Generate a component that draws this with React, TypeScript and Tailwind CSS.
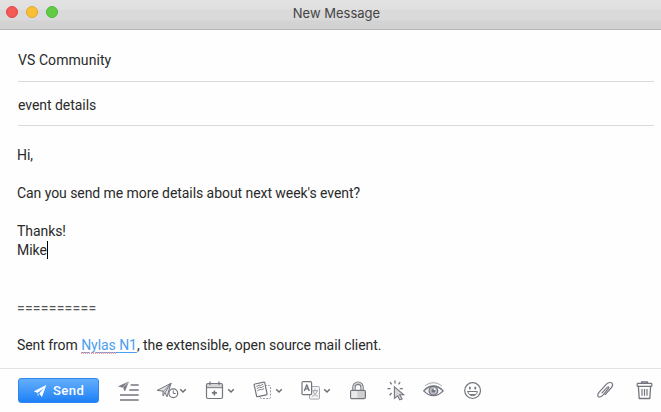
import type { ReactNode } from "react";

function Icon({ w, className = "", children }: { w: number; className?: string; children: ReactNode }) {
  return (
    <svg
      width={w}
      height={30}
      viewBox={`0 0 ${w} 30`}
      fill="none"
      stroke="#74767f"
      strokeWidth={1.2}
      strokeLinecap="round"
      strokeLinejoin="round"
      className={`shrink-0 ${className}`}
    >
      {children}
    </svg>
  );
}

function Chevron({ className }: { className: string }) {
  return (
    <svg width={8} height={30} viewBox="0 0 8 30" fill="none" stroke="#6b6d75" strokeWidth={1.5} className={`shrink-0 ${className}`}>
      <path d="M1.2 14.3 4 17 6.8 14.3" />
    </svg>
  );
}

function TitleBar() {
  return (
    <header className="relative flex h-[30px] shrink-0 justify-center border-b border-[#b5b5b5] bg-[linear-gradient(#e2e2e2_0px,#e0e0e0_9px,#dadada_10px,#d9d9d9_20px,#d3d3d3_21px,#d2d2d2_29px)]">
      <div className="absolute top-[6px] left-[6px] flex gap-2">
        <span className="size-3 rounded-full border border-[#e2443f] bg-[#f25b57]" />
        <span className="size-3 rounded-full border border-[#e3a52c] bg-[#f9bf35]" />
        <span className="size-3 rounded-full border border-[#4fb637] bg-[#61cb45]" />
      </div>
      <h1 className="pl-[12px] font-[Inter,sans-serif] text-[13px] leading-[27px] text-[#454545]">New Message</h1>
    </header>
  );
}

function Toolbar() {
  return (
    <footer className="flex h-[44px] shrink-0 items-start border-t border-[#e2e2e2] pt-[6px] pl-[18px]">
      <button className="mt-[3px] flex h-[25px] w-[81px] shrink-0 items-center rounded-[3px] border border-[#2f86f0] bg-linear-to-b from-[#62aefa] to-[#1b80f7] pl-[14px] text-[13px] font-medium tracking-[0.5px] text-white">
        <svg width={14} height={14} viewBox="0 0 14 14" fill="#fff" className="mr-[6px] shrink-0">
          <path d="M.8 7.2 13.3 1 9 13 6.2 9.7 11 3.7 4.6 8.9z" />
          <path d="M4.5 9.2 5.8 10.3 4.9 12.4z" />
        </svg>
        Send
      </button>

      <Icon w={24} className="ml-[18px]">
        <path d="M2 11.2 11.4 7 7.8 16 6.6 12.8z" fill="#74767f" strokeWidth={0.6} />
        <path d="M10.5 8 5.7 12.6" stroke="#fff" strokeWidth={0.7} />
        <path d="M13.7 10h8M12.3 15h9.4M3 20h18.7M3 25h18.7" strokeWidth={1.7} strokeLinecap="butt" />
      </Icon>

      <Icon w={24} className="ml-[14px]">
        <path d="M2.5 15.2 16 8.3 12 21.8 9.9 17.7 8 21V16.5z" fill="#e4e4e6" strokeWidth={1} />
        <path d="M16 8.3 8 16.8M16 8.3 10 17.6" strokeWidth={0.9} />
        <circle cx="18.3" cy="18.3" r="4.4" fill="#fff" />
        <path d="M18.3 15.8v2.7h2" strokeWidth={1} />
      </Icon>
      <Chevron className="" />

      <Icon w={22} className="ml-[17px]">
        <path d="M2.5 8.5h16v4.2h-16z" fill="#d6d6d8" stroke="none" />
        <rect x="2.5" y="8.5" width="16" height="15" rx="1.5" />
        <path d="M2.5 12.7h16" strokeWidth={1} />
        <path d="M6 7v2.5M15 7v2.5" strokeWidth={1.3} />
        <path d="M10.4 15.4v5M7.9 17.9h5" strokeWidth={1.6} strokeLinecap="butt" />
      </Icon>
      <Chevron className="ml-[1px]" />

      <Icon w={22} className="ml-[16px]">
        <rect x="9.5" y="10.5" width="10" height="13" rx="1" stroke="#96979d" strokeDasharray="2 1.3" strokeLinecap="butt" strokeWidth={1} />
        <path d="M4 9 12.8 7.2Q13.6 7 13.8 7.9L16 18.6Q16.2 19.6 15.3 19.8L6.8 21.7Q5.8 21.9 5.6 21L3.2 10.2Q3 9.2 4 9z" fill="#fff" strokeWidth={1.2} />
        <path d="M5.6 11.4 8 10.1 9.6 10.6 12 9.3M6.1 13.5 8.5 12.1 10.1 12.7 12.5 11.4M6.6 15.6 9 14.4 10.8 14.7 12.9 13.6" strokeWidth={0.9} />
      </Icon>
      <Chevron className="ml-[2px]" />

      <Icon w={22} className="ml-[17px]">
        <rect x="9.5" y="11.5" width="10" height="12.6" rx="1" stroke="#a8a9ae" fill="#f3f3f4" strokeWidth={1} />
        <path d="M12.3 15.7h5.4M15 14.3v1.4M17 16.2C16.3 18.7 14.5 20.5 12.5 21.1M13.3 16.5C14 18.9 15.8 20.7 17.7 21.1" stroke="#96979d" strokeWidth={0.8} />
        <rect x="2" y="6.7" width="9.6" height="13" rx="1.2" fill="#fff" />
        <path d="M4.3 15.9 6.8 9.8 9.3 15.9M5.2 13.9h3.2" strokeWidth={1.4} strokeLinecap="butt" />
      </Icon>
      <Chevron className="ml-[1px]" />

      <Icon w={20} className="ml-[17px]">
        <path d="M4.8 15.3v-3.1a5.2 5.2 0 0 1 10.4 0v3.1M7.1 15.3v-3a2.9 2.9 0 0 1 5.8 0v3" strokeWidth={1.1} />
        <path d="M6 15v-2.8a4 4 0 0 1 8 0V15" stroke="#c4c5c9" strokeWidth={1} />
        <rect x="2.6" y="15.4" width="14.8" height="8.2" rx="1.3" fill="#cfcfd2" />
        <path d="M3.3 16.1h6v6.8h-6z" fill="#e9e9eb" stroke="none" />
      </Icon>

      <Icon w={22} className="ml-[17px]">
        <path d="M9.4 11.8 18.7 19.8H14.7L17.1 23.9 14.8 24.9 12.7 20.9 9.4 23.4z" fill="#d9d9db" strokeWidth={1.1} strokeLinejoin="miter" />
        <path d="M10 5.6v3M5 7.2 6.7 9.4M15.2 7.2 13.5 9.4M2.5 13.7h3M14.8 13.7h3M4.6 20.2 6.6 18" strokeWidth={1.3} strokeLinecap="butt" />
      </Icon>

      <Icon w={25} className="ml-[14px]">
        <path d="M2.7 15.9Q7.2 11 12.4 11T22.2 15.9Q17.6 20.7 12.4 20.7T2.7 15.9z" fill="#f5f5f6" strokeWidth={1.3} />
        <path d="M4.2 10.6Q12.4 4.7 20.6 10.6" stroke="#b8b9bd" strokeWidth={1.1} />
        <circle cx="12.4" cy="15.7" r="4.3" fill="#b9bac0" />
        <circle cx="12.4" cy="15.7" r="1.9" fill="#74767f" stroke="none" />
        <circle cx="13.5" cy="14.2" r="0.9" fill="#fff" stroke="none" />
      </Icon>

      <Icon w={22} className="ml-[16px]">
        <circle cx="10.6" cy="15.6" r="7.9" />
        <ellipse cx="7.9" cy="13.1" rx="1" ry="1.5" fill="#74767f" stroke="none" />
        <ellipse cx="13.3" cy="13.1" rx="1" ry="1.5" fill="#74767f" stroke="none" />
        <path d="M5.9 16.5h9.4a4.7 4.2 0 0 1-9.4 0z" fill="#fff" strokeWidth={1} />
        <path d="M7 19h7.2a4.4 2.8 0 0 1-7.2 0z" fill="#74767f" stroke="none" />
      </Icon>

      <Icon w={20} className="ml-auto">
        <path d="M7 17.9 12.5 12.1C13.2 11.2 14.4 12.2 13.7 13.1L8.2 19.8C5.6 22.4 3 22.8 2.8 20.7 2.6 19.6 3.2 18.4 4.2 17.2L11.5 9.2C13.6 7.1 16.3 7 17.3 8.5 18.2 10 17.4 11.5 16 13.2L10.2 19.6" />
      </Icon>

      <Icon w={21} className="mr-[6px] ml-[19px]">
        <path d="M7.5 8.2V7h6v1.2" strokeWidth={1.3} />
        <rect x="3.2" y="8.4" width="14.6" height="3" rx=".5" />
        <path d="M4.4 11.5 5.2 23.5h10.6L16.6 11.5" strokeWidth={1.3} />
        <path d="M8 14v6.7M10.5 14v6.7M13 14v6.7" strokeLinecap="butt" />
      </Icon>
    </footer>
  );
}

export default function App() {
  return (
    <div className="flex h-[412px] w-[661px] flex-col overflow-hidden bg-[#fefefe] font-[Roboto,sans-serif] text-[14px] text-[#2a2a2a]">
      <TitleBar />
      <section className="mr-[7px] ml-[18px] shrink-0">
        <div className="h-[52px] border-b border-[#dadada] pt-[21px] leading-[19px] tracking-[0.07px]">VS Community</div>
        <div className="h-[44px] border-b border-[#dadada] pt-[14px] leading-[19px] tracking-[-0.04px]">event details</div>
      </section>
      <main className="flex-1 pt-5 pl-[17px] leading-[19px] tracking-[-0.06px] whitespace-pre">
        <p>Hi,</p>
        <br />
        <p>Can you send me more details about next week's event?</p>
        <br />
        <p>Thanks!</p>
        <p className="flex">
          Mike<span className="h-[18px] w-px bg-black" />
        </p>
        <br />
        <br />
        <p className="pt-px leading-[18px] tracking-[0.25px] text-[#555]">==========</p>
        <br />
        <p>
          Sent from{" "}
          <a className="text-[#4b9df0] underline underline-offset-2">
            <span className="relative">
              Nylas
              <span className="absolute -bottom-[1px] left-0 h-[2px] w-full bg-[repeating-linear-gradient(90deg,#e99_0px,#e99_1px,transparent_1px,transparent_2px)]" />
            </span>{" "}
            N1
          </a>
          , the extensible, open source mail client.
        </p>
      </main>
      <Toolbar />
    </div>
  );
}
